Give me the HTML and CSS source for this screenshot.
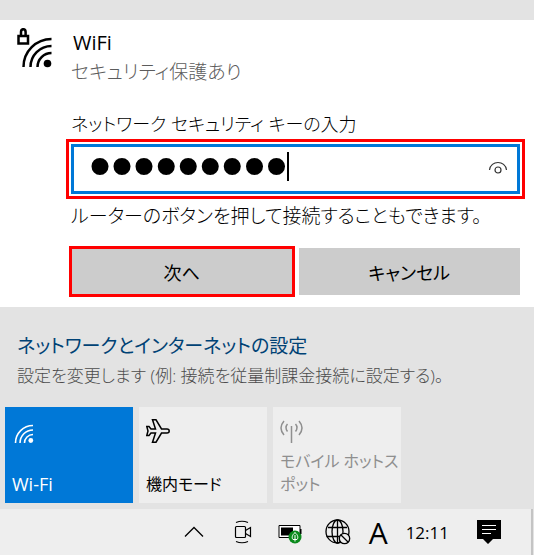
FILE: index.html
```html
<!DOCTYPE html>
<html lang="ja">

<head>
    <meta charset="UTF-8">
    <meta name="viewport" content="width=device-width, initial-scale=1.0">
    <title>WiFi</title>
    <link rel="stylesheet" href="styles.css">
</head>

<body>
    <main class="flyout">
        <section class="network">
            <svg class="network-icon" viewBox="0 0 36 42" fill="none" stroke="#000">
                <rect x="1.500" y="8" width="9.500" height="7.500" stroke-width="2.500" />
                <path d="M4 8V4a2.300 2.800 0 0 1 4.600 0v4" stroke-width="2.500" />
                <path d="M6.500 39A28 28 0 0 1 34.500 11M13.500 39A21 21 0 0 1 34.500 18M20.500 39A14 14 0 0 1 34.500 25" stroke-width="2.500" />
                <circle cx="30.500" cy="35.500" r="3.800" fill="#000" stroke="none" />
            </svg>
            <div class="network-body">
                <h1>WiFi</h1>
                <p class="status">セキュリティ保護あり</p>
                <form id="key-form">
                    <label for="network-key">ネットワーク セキュリティ キーの入力</label>
                    <div class="key-box">
                        <input type="password" id="network-key" value="password1" autocomplete="off">
                        <span class="caret"></span>
                        <button type="button" class="reveal" aria-label="パスワードを表示">
                            <svg viewBox="0 0 20 14" fill="none" stroke="#333">
                                <path d="M1.500 9C2 4 6 1.500 10 1.500S18 4 18.500 9" stroke-width="1.200" />
                                <circle cx="10" cy="9" r="3" stroke-width="1.200" />
                            </svg>
                        </button>
                    </div>
                    <p class="hint">ルーターのボタンを押して接続することもできます。</p>
                    <div class="actions">
                        <button type="submit" class="next">次へ</button>
                        <button type="button">キャンセル</button>
                    </div>
                </form>
            </div>
        </section>

        <section class="settings">
            <a href="#settings">ネットワークとインターネットの設定</a>
            <p>設定を変更します (例: 接続を従量制課金接続に設定する)。</p>
        </section>

        <div class="tiles">
            <button type="button" class="tile active">
                <svg viewBox="0 0 24 24" fill="none" stroke="#fff">
                    <path d="M3.500 24A17.500 17.500 0 0 1 21 6.500M8 24A13 13 0 0 1 21 11M12.500 24A8.500 8.500 0 0 1 21 15.500" stroke-width="1.600" />
                    <circle cx="18.800" cy="21.500" r="2.400" fill="#fff" stroke="none" />
                </svg>
                <span>Wi-Fi</span>
            </button>
            <button type="button" class="tile">
                <svg viewBox="0 0 24 24" fill="none" stroke="#000">
                    <path d="M.8 7.500H3L5 10H9.500L6.500 .8H10L15.500 10H21A2.200 2 0 0 1 21 14H15.500L10 23.200H6.500L9.500 14H5L3 16.500H.8L2 12Z" stroke-width="1.500" />
                </svg>
                <span>機内モード</span>
            </button>
            <button type="button" class="tile" disabled>
                <svg viewBox="0 0 24 24" fill="none" stroke="#8f8f8f">
                    <path d="M11.500 7V24M7.500 5Q4.500 8.500 7.500 12.500M15.500 5Q18.500 8.500 15.500 12.500M4 2Q-2 9 4 16M19 2Q25 9 19 16" stroke-width="1.500" />
                </svg>
                <span>モバイル ホットスポット</span>
            </button>
        </div>
    </main>

    <footer class="taskbar">
        <svg class="chevron" viewBox="0 0 20 12" fill="none" stroke="#000">
            <path d="M1 10.500L10 1.500L19 10.500" stroke-width="1.300" />
        </svg>
        <svg class="camera" viewBox="0 0 18 24" fill="none" stroke="#000">
            <rect x="1.500" y="6.500" width="10" height="11" rx="1" stroke-width="1.200" />
            <path d="M11.500 10.500L16.500 7.500V16.500L11.500 13.500M2 2.500Q8 0 14 2.500M2 21.500Q8 24 14 21.500" stroke-width="1.200" />
        </svg>
        <svg class="battery" viewBox="0 0 24 24">
            <path d="M1 5.500H22V17.500H1Z" fill="#fff" stroke="#000" />
            <path d="M3 7.500H15V15.500H3ZM22 9H23.500V14H22Z" />
            <circle cx="17" cy="17" r="6.500" fill="#0a8a1c" />
            <path d="M17 21.500V15M17 12.500C14 15 13.500 18 15 19.500H19C20.500 18 20 15 17 12.500Z" fill="none" stroke="#fff" />
        </svg>
        <svg class="globe" viewBox="0 0 26 26" fill="none" stroke="#000" stroke-width="1.300">
            <circle cx="12.500" cy="12.500" r="11.500" />
            <ellipse cx="12.500" cy="12.500" rx="5.500" ry="11.500" />
            <path d="M3 8.500H22M1.500 17.500H15M12.500 1V24" />
            <circle cx="19.500" cy="19.500" r="5.200" fill="#eee" />
            <path d="M16 16L23 23" />
        </svg>
        <span class="ime">A</span>
        <time>12:11</time>
        <svg class="notice" viewBox="0 0 24 24">
            <path d="M0 0H24V19H16L11 24L6 19H0Z" />
            <path d="M5 5.500H19M5 9.500H19M5 13.500H14" stroke="#fff" />
        </svg>
    </footer>
</body>

</html>
```
FILE: styles.css
```css
/* Reset styles */
* {
    margin: 0;
    padding: 0;
    box-sizing: border-box;
}

body {
    display: flex;
    flex-direction: column;
    min-height: 100vh;
    background-color: #e3e3e3;
    color: #000;
    font-family: "Open Sans", "Noto Sans CJK JP", sans-serif;
    font-size: 19px;
    font-weight: 300;
    font-feature-settings: "palt";
}

button,
input {
    font: inherit;
    font-feature-settings: inherit;
    color: inherit;
    border: none;
    border-radius: 0;
}

svg {
    display: block;
    flex: none;
}

.flyout {
    flex: 1;
    padding-top: 20px;
}

/* Selected network */
.network {
    display: flex;
    gap: 18px;
    padding: 8px 14px 12px 17px;
    background-color: #fff;
}

.network-icon {
    width: 36px;
    height: 42px;
}

.network-body {
    flex: 1;
}

h1 {
    padding-left: 2px;
    font-size: 20px;
    font-weight: 400;
    line-height: 30px;
}

.status {
    color: #5c5c5c;
    line-height: 28px;
}

label {
    display: block;
    margin-top: 20px;
    font-size: 18px;
    line-height: 36px;
}

.key-box {
    position: relative;
    margin-top: 2px;
    height: 50px;
    border: 3px solid #0078d7;
    outline: 3px solid #f00;
    outline-offset: 2px;
}

.key-box input {
    display: block;
    width: 100%;
    height: 36px;
    padding: 0 50px 0 15px;
    background: none;
    outline: none;
    font-family: "Liberation Sans", sans-serif;
    font-size: 63px;
    font-weight: 400;
    line-height: 36px;
}

.caret {
    position: absolute;
    left: 213px;
    top: 5px;
    width: 2px;
    height: 29px;
    background-color: #000;
}

.reveal {
    position: absolute;
    right: 9px;
    top: 14px;
    background: none;
}

.reveal svg {
    width: 20px;
    height: 14px;
}

.hint {
    margin-top: 6px;
    line-height: 32px;
}

.actions {
    display: grid;
    grid-template-columns: 1fr 1fr;
    gap: 6px;
    margin-top: 16px;
}

.actions button {
    height: 47px;
    background-color: #ccc;
    font-size: 18px;
    font-weight: 400;
}

.actions .next {
    outline: 3px solid #f00;
    outline-offset: -1px;
}

/* Settings link */
.settings {
    padding: 24px 17px 16px;
}

.settings a {
    display: block;
    color: #004275;
    font-weight: 400;
    line-height: 30px;
    text-decoration: none;
}

.settings p {
    color: #4c4c4c;
    font-size: 17px;
    line-height: 30px;
}

/* Quick action tiles */
.tiles {
    display: flex;
    gap: 6px;
    padding: 0 5px 6px;
}

.tile {
    display: flex;
    flex-direction: column;
    justify-content: space-between;
    width: 128px;
    height: 96px;
    padding: 12px 2px 7px 7px;
    background-color: #eee;
    font-size: 16px;
    font-weight: 400;
    line-height: 23px;
    text-align: left;
    word-break: break-all;
}

.tile svg {
    width: 24px;
    height: 24px;
}

.tile.active {
    background-color: #0078d7;
    color: #fff;
    font-size: 18px;
}

.tile:disabled {
    color: #8f8f8f;
}

/* Taskbar */
.taskbar {
    display: flex;
    align-items: center;
    justify-content: flex-end;
    height: 46px;
    margin-right: 1px;
    padding-right: 30px;
    border-right: 2px solid #c4c4c4;
    background-color: #eee;
}

.chevron {
    width: 20px;
    height: 12px;
    margin-right: 30px;
}

.camera {
    width: 18px;
    height: 24px;
    margin-right: 26px;
}

.battery {
    width: 24px;
    height: 24px;
    margin-right: 23px;
}

.globe {
    width: 26px;
    height: 26px;
    margin-right: 18px;
}

.ime {
    font-size: 30px;
    font-weight: 400;
    margin-right: 18px;
}

time {
    font-size: 17px;
    font-weight: 400;
    margin-right: 28px;
}

.notice {
    width: 24px;
    height: 24px;
}
```
